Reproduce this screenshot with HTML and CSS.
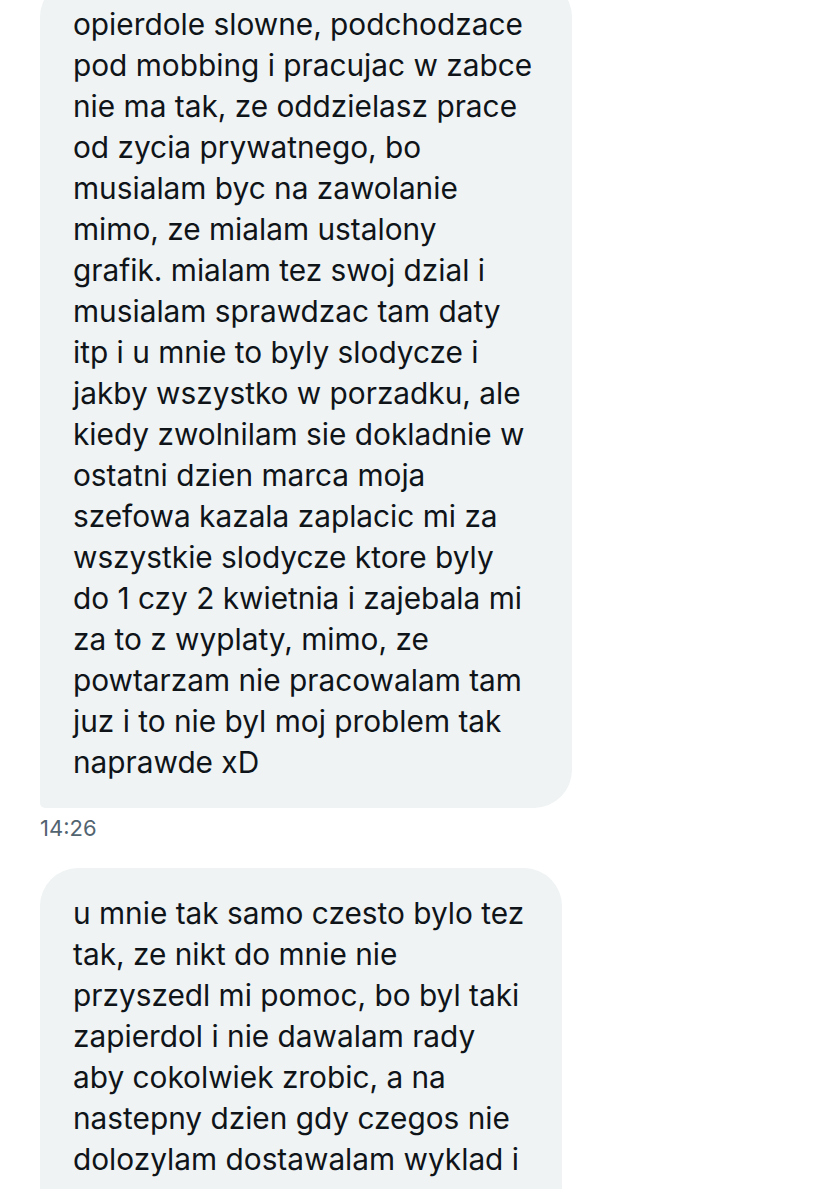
FILE: index.html
```html
<!DOCTYPE html>
<html lang="pl">
<head>
<meta charset="utf-8">
<title>Wiadomości</title>
<link rel="stylesheet" href="styles.css">
</head>
<body>
<main class="chat">
  <div class="message">
    <div class="bubble bubble-first">opierdole slowne, podchodzace<br>pod mobbing i pracujac w zabce<br>nie ma tak, ze oddzielasz prace<br>od zycia prywatnego, bo<br>musialam byc na zawolanie<br>mimo, ze mialam ustalony<br>grafik. mialam tez swoj dzial i<br>musialam sprawdzac tam daty<br>itp i u mnie to byly slodycze i<br>jakby wszystko w porzadku, ale<br>kiedy zwolnilam sie dokladnie w<br>ostatni dzien marca moja<br>szefowa kazala zaplacic mi za<br>wszystkie slodycze ktore byly<br>do 1 czy 2 kwietnia i zajebala mi<br>za to z wyplaty, mimo, ze<br>powtarzam nie pracowalam tam<br>juz i to nie byl moj problem tak<br>naprawde xD</div>
    <div class="time">14:26</div>
  </div>
  <div class="message">
    <div class="bubble bubble-second">u mnie tak samo czesto bylo tez<br>tak, ze nikt do mnie nie<br>przyszedl mi pomoc, bo byl taki<br>zapierdol i nie dawalam rady<br>aby cokolwiek zrobic, a na<br>nastepny dzien gdy czegos nie<br>dolozylam dostawalam wyklad i</div>
  </div>
</main>
</body>
</html>
```

FILE: styles.css
```css
html, body {
  margin: 0;
  padding: 0;
  background: #ffffff;
}

body {
  font-family: "Inter", "Noto Sans", "Liberation Sans", sans-serif;
  color: #0f1419;
  overflow: hidden;
}

.chat {
  display: flex;
  flex-direction: column;
  gap: 26px;
  padding-left: 40px;
  margin-top: -21px;
}

.message {
  display: flex;
  flex-direction: column;
  align-items: flex-start;
}

.bubble {
  background: #eff3f4;
  box-sizing: border-box;
  padding: 25px 20px 25px 33px;
  font-size: 29.8px;
  line-height: 41px;
  white-space: nowrap;
  border-radius: 38px;
}

.bubble-first {
  width: 532px;
  border-bottom-left-radius: 5px;
}

.bubble-second {
  width: 522px;
  padding-bottom: 80px;
}

.time {
  margin-top: 6px;
  font-size: 22px;
  line-height: 28px;
  color: #536471;
}
```
